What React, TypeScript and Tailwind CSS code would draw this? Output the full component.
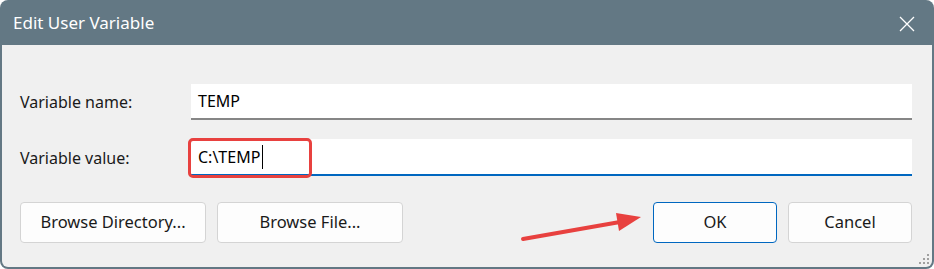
export default function App() {
  return (
    <div className="relative h-[269px] w-[934px] bg-white" style={{ fontFamily: '"Noto Sans", "Open Sans", sans-serif' }}>
      <div className="flex h-full w-full flex-col overflow-hidden rounded-[8px] bg-[#637884]">
        {/* title bar */}
        <div className="flex h-[45px] shrink-0 items-center justify-between pl-[13px] pr-[19px]">
          <span className="mt-[1px] text-[17px] text-white">Edit User Variable</span>
          <svg width="16" height="16" viewBox="0 0 16 16" className="mt-[2px]">
            <path d="M1 1 L15 15 M15 1 L1 15" stroke="white" strokeWidth="1.3" fill="none" />
          </svg>
        </div>

        {/* body */}
        <div className="relative mx-[2px] mb-[2px] flex flex-1 flex-col rounded-b-[6px] bg-[#f0f0f0] pl-[18px] pr-[20px] pt-[39px]">
          <div className="flex h-[36px] items-center">
            <div className="w-[171px] text-[16px] text-[#1a1a1a]">Variable name:</div>
            <div className="flex h-full flex-1 items-center border-b-[2px] border-[#868686] bg-white pl-[7px] text-[16px] text-black">
              TEMP
            </div>
          </div>
          <div className="mt-[19px] flex h-[37px] items-center">
            <div className="w-[171px] text-[16px] text-[#1a1a1a]">Variable value:</div>
            <div className="flex h-full flex-1 items-center border-b-[2px] border-[#0067c0] bg-white pl-[7px] text-[16px] text-black">
              C:\TEMP
              <span className="ml-[2px] h-[24px] w-[1px] bg-black" />
            </div>
          </div>

          <div className="mt-[26px] flex h-[41px] items-stretch">
            <button className="w-[186px] rounded-[4px] border border-[#d4d4d4] bg-[#fdfdfd] text-[16.5px] text-[#1a1a1a]">
              Browse Directory...
            </button>
            <button className="ml-[11px] w-[186px] rounded-[4px] border border-[#d4d4d4] bg-[#fdfdfd] text-[16.5px] text-[#1a1a1a]">
              Browse File...
            </button>
            <div className="flex-1" />
            <button className="w-[124px] rounded-[4px] border border-[#0067c0] bg-[#fdfdfd] text-[16.5px] text-[#1a1a1a]">
              OK
            </button>
            <button className="ml-[11px] w-[124px] rounded-[4px] border border-[#d4d4d4] bg-[#fdfdfd] text-[16.5px] text-[#1a1a1a]">
              Cancel
            </button>
          </div>

          {/* resize grip */}
          <svg width="12" height="12" viewBox="0 0 12 12" className="absolute bottom-[2px] right-[2px]">
            <rect x="9" y="1" width="2" height="2" fill="#a0a0a0" />
            <rect x="5" y="5" width="2" height="2" fill="#a0a0a0" />
            <rect x="9" y="5" width="2" height="2" fill="#a0a0a0" />
            <rect x="1" y="9" width="2" height="2" fill="#a0a0a0" />
            <rect x="5" y="9" width="2" height="2" fill="#a0a0a0" />
            <rect x="9" y="9" width="2" height="2" fill="#a0a0a0" />
          </svg>
        </div>
      </div>

      {/* annotations */}
      <div className="absolute left-[188px] top-[138px] h-[40px] w-[124px] rounded-[5px] border-[3px] border-[#e8413f]" />
      <svg className="absolute left-0 top-0" width="934" height="269" viewBox="0 0 934 269">
        <line x1="523" y1="239" x2="620" y2="222" stroke="#e8413f" strokeWidth="4" strokeLinecap="round" />
        <polygon points="641,217 616,213 619,231" fill="#e8413f" />
      </svg>
    </div>
  )
}
